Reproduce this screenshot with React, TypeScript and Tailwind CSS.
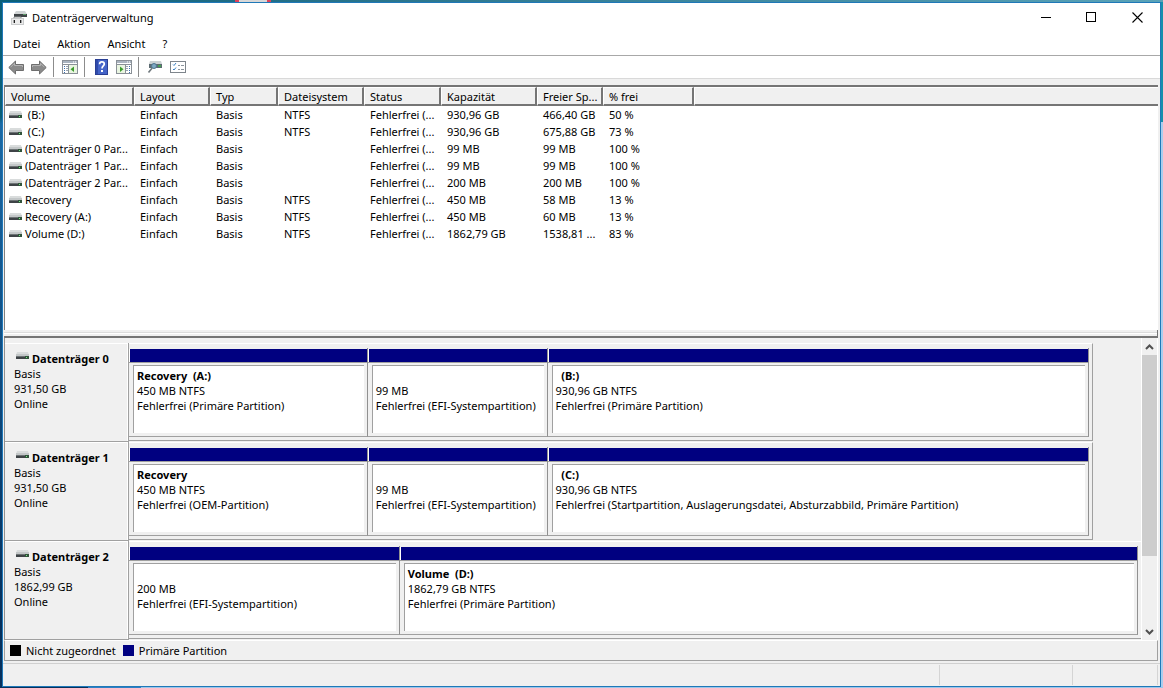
import type { ReactNode } from "react";

type Volume = {
  name: string;
  fs: string;
  capacity: string;
  free: string;
  percent: string;
};

type Partition = {
  name?: string;
  size: string;
  state: string;
};

type Disk = {
  name: string;
  size: string;
  grid: string;
  full?: boolean;
  partitions: Partition[];
};

const volumes: Volume[] = [
  { name: "\u00a0(B:)", fs: "NTFS", capacity: "930,96 GB", free: "466,40 GB", percent: "50 %" },
  { name: "\u00a0(C:)", fs: "NTFS", capacity: "930,96 GB", free: "675,88 GB", percent: "73 %" },
  { name: "(Datenträger 0 Par...", fs: "", capacity: "99 MB", free: "99 MB", percent: "100 %" },
  { name: "(Datenträger 1 Par...", fs: "", capacity: "99 MB", free: "99 MB", percent: "100 %" },
  { name: "(Datenträger 2 Par...", fs: "", capacity: "200 MB", free: "200 MB", percent: "100 %" },
  { name: "Recovery", fs: "NTFS", capacity: "450 MB", free: "58 MB", percent: "13 %" },
  { name: "Recovery (A:)", fs: "NTFS", capacity: "450 MB", free: "60 MB", percent: "13 %" },
  { name: "Volume (D:)", fs: "NTFS", capacity: "1862,79 GB", free: "1538,81 ...", percent: "83 %" },
];

const columns = [
  { label: "Volume", width: "w-[129px]" },
  { label: "Layout", width: "w-[76px]" },
  { label: "Typ", width: "w-[68px]" },
  { label: "Dateisystem", width: "w-[86px]" },
  { label: "Status", width: "w-[77px]" },
  { label: "Kapazität", width: "w-[96px]" },
  { label: "Freier Sp...", width: "w-[66px]" },
  { label: "% frei", width: "w-[91px]" },
];

const disks: Disk[] = [
  {
    name: "Datenträger 0",
    size: "931,50 GB",
    grid: "grid-cols-[239fr_180fr_542fr]",
    partitions: [
      { name: "Recovery\u00a0 (A:)", size: "450 MB NTFS", state: "Fehlerfrei (Primäre Partition)" },
      { size: "99 MB", state: "Fehlerfrei (EFI-Systempartition)" },
      { name: "\u00a0 (B:)", size: "930,96 GB NTFS", state: "Fehlerfrei (Primäre Partition)" },
    ],
  },
  {
    name: "Datenträger 1",
    size: "931,50 GB",
    grid: "grid-cols-[239fr_180fr_542fr]",
    partitions: [
      { name: "Recovery", size: "450 MB NTFS", state: "Fehlerfrei (OEM-Partition)" },
      { size: "99 MB", state: "Fehlerfrei (EFI-Systempartition)" },
      {
        name: "\u00a0 (C:)",
        size: "930,96 GB NTFS",
        state: "Fehlerfrei (Startpartition, Auslagerungsdatei, Absturzabbild, Primäre Partition)",
      },
    ],
  },
  {
    name: "Datenträger 2",
    size: "1862,99 GB",
    grid: "grid-cols-[271fr_739fr]",
    full: true,
    partitions: [
      { size: "200 MB", state: "Fehlerfrei (EFI-Systempartition)" },
      { name: "Volume\u00a0 (D:)", size: "1862,79 GB NTFS", state: "Fehlerfrei (Primäre Partition)" },
    ],
  },
];

function DriveIcon() {
  return (
    <svg width="13" height="8" viewBox="0 0 13 8" className="shrink-0" aria-hidden="true">
      <path d="M1 0h11l1 3H0z" fill="#d9dcdc" />
      <rect x="0" y="2" width="13" height="2" fill="#c3c7c8" />
      <rect x="0" y="4" width="13" height="3" fill="#3e4346" />
      <rect x="0" y="4" width="13" height="1" fill="#6d7375" />
      <rect x="9" y="4" width="4" height="3" fill="#31533a" />
      <rect x="10" y="5" width="1" height="1" fill="#7bea8c" />
    </svg>
  );
}

function AppIcon() {
  return (
    <svg width="16" height="16" viewBox="0 0 16 16" aria-hidden="true">
      <path d="M5 1h9l2 3H3z" fill="#d0d4d5" />
      <rect x="3" y="4" width="13" height="3" fill="#3f4447" />
      <rect x="12" y="4" width="3" height="1" fill="#5d9c69" />
      <rect x="0" y="8" width="13" height="7" fill="#c9cbcc" />
      <rect x="1" y="9" width="11" height="5" fill="#ececec" />
      <path d="M3 8V7h7v1" fill="none" stroke="#8b8e90" />
      <rect x="3" y="10" width="1" height="3" fill="#222" />
      <rect x="9" y="10" width="1" height="3" fill="#222" />
      <rect x="2" y="10" width="1" height="3" fill="#a3a5a6" />
      <rect x="10" y="10" width="1" height="3" fill="#a3a5a6" />
    </svg>
  );
}

function ArrowIcon({ right }: { right?: boolean }) {
  return (
    <svg width="16" height="15" viewBox="0 0 16 15" className={right ? "-scale-x-100" : ""} aria-hidden="true">
      <path d="M0.800 7.500L7.500 1v3.500h8v6h-8V14z" fill="#8b8b8b" stroke="#6e6e6e" strokeLinejoin="round" />
      <path d="M2.500 7.300L6.500 3.300v2.200h8v1.500" fill="none" stroke="#b5b5b5" />
    </svg>
  );
}

function PaneIcon({ right }: { right?: boolean }) {
  return (
    <svg width="16" height="14" viewBox="0 0 16 14" aria-hidden="true">
      <rect x="0.500" y="0.500" width="15" height="13" fill="#fff" stroke="#8a9097" />
      <rect x="1" y="1" width="14" height="2" fill="#a9b3bf" />
      <path d="M11 2h1M13 2h1" stroke="#fff" />
      <path d="M1 4.500h14" stroke="#8a9097" />
      <g transform={right ? "translate(16 0) scale(-1 1)" : undefined}>
        <path d="M6.500 5v8" stroke="#8a9097" />
        <path d="M2 6.500h1M2 8.500h1M2 10.500h1M2 12.500h1" stroke="#3b6fae" />
        <path d="M4 6.500h2M4 8.500h2M4 10.500h2" stroke="#9aa5b1" />
        <rect x="7" y="5" width="8" height="8" fill="#e9f5e1" />
        <path d="M12 6.500v5.500L8.500 9.200z" fill="#3c9c2c" />
      </g>
    </svg>
  );
}

function HelpIcon() {
  return (
    <svg width="13" height="16" viewBox="0 0 13 16" aria-hidden="true">
      <rect x="0.500" y="0.500" width="12" height="15" fill="#4464c8" stroke="#2a3f94" />
      <rect x="1" y="1" width="2" height="14" fill="#2f4bab" />
      <path
        d="M4.600 5.200C4.600 3.500 5.600 2.900 6.900 2.900C8.300 2.900 9.300 3.700 9.300 5C9.300 6.900 7 7.100 7 9.600"
        fill="none"
        stroke="#fff"
        strokeWidth="1.700"
      />
      <rect x="6" y="11" width="2" height="2" fill="#fff" />
    </svg>
  );
}

function RescanIcon() {
  return (
    <svg width="16" height="14" viewBox="0 0 16 14" aria-hidden="true">
      <path d="M3 1h11l1 3H2z" fill="#ccd2d4" />
      <rect x="2" y="4" width="13" height="4" fill="#5d6b72" />
      <rect x="11" y="5" width="3" height="2" fill="#45a052" />
      <circle cx="7" cy="6" r="2.500" fill="#7fa9c4" stroke="#4f7890" />
      <path d="M5.200 8L1.500 12.500" stroke="#6f787d" strokeWidth="1.600" />
    </svg>
  );
}

function ChecklistIcon() {
  return (
    <svg width="16" height="12" viewBox="0 0 16 12" aria-hidden="true">
      <rect x="0.500" y="0.500" width="15" height="11" fill="#fff" stroke="#7e858c" />
      <path d="M3 3.500l1 1 2-2.500M3 8l1 1 2-2.500" fill="none" stroke="#3b82c4" />
      <path d="M8 4.500h2M11 4.500h3M8 8.500h2M11 8.500h3" stroke="#8b949c" />
    </svg>
  );
}

function ToolButton({ label, children }: { label: string; children: ReactNode }) {
  return (
    <button type="button" aria-label={label} className="flex h-5 w-4 items-center justify-center">
      {children}
    </button>
  );
}

function Separator() {
  return <span className="ml-1.5 mr-2 h-5 w-px bg-[#8c8c8c]" />;
}

function TitleBar() {
  return (
    <header className="flex h-[29px] items-center bg-white pl-2">
      <AppIcon />
      <h1 className="ml-[5px]">Datenträgerverwaltung</h1>
      <div className="ml-auto flex h-full">
        <button type="button" aria-label="Minimieren" className="flex w-[46px] items-center justify-center">
          <svg width="11" height="11" viewBox="0 0 11 11">
            <path d="M1 5.500h10" stroke="#000" />
          </svg>
        </button>
        <button type="button" aria-label="Maximieren" className="flex w-[46px] items-center justify-center">
          <svg width="11" height="11" viewBox="0 0 11 11">
            <rect x="0.500" y="0.500" width="9" height="9" fill="none" stroke="#000" />
          </svg>
        </button>
        <button type="button" aria-label="Schließen" className="flex w-[46px] items-center justify-center">
          <svg width="11" height="11" viewBox="0 0 11 11">
            <path d="M0.500 0.500l10 10M10.500 0.500l-10 10" stroke="#000" strokeWidth="1.100" />
          </svg>
        </button>
      </div>
    </header>
  );
}

function VolumeTable() {
  return (
    <div className="ml-px mr-0.5 flex-1 border-l border-t-2 border-[#808080] border-t-[#757575] bg-white">
      <table className="w-full table-fixed border-separate border-spacing-0 text-left">
        <thead>
          <tr className="h-[19px] bg-[#f0f0f0]">
            {columns.map((c) => (
              <th
                key={c.label}
                scope="col"
                className={`${c.width} border-b-2 border-l border-r-2 border-t border-[#757575] border-l-white border-t-white p-0 pl-[5px] font-normal`}
              >
                {c.label}
              </th>
            ))}
            <td className="border-b-2 border-l border-t border-[#757575] border-l-white border-t-white p-0" />
          </tr>
        </thead>
        <tbody>
          {volumes.map((v) => (
            <tr key={v.name} className="h-[17px] whitespace-nowrap">
              <td className="p-0 pl-1">
                <div className="flex items-center gap-[3px]">
                  <DriveIcon />
                  {v.name}
                </div>
              </td>
              <td className="p-0 pl-1.5">Einfach</td>
              <td className="p-0 pl-1.5">Basis</td>
              <td className="p-0 pl-1.5">{v.fs}</td>
              <td className="p-0 pl-1.5">Fehlerfrei (...</td>
              <td className="p-0 pl-1.5">{v.capacity}</td>
              <td className="p-0 pl-1.5">{v.free}</td>
              <td className="p-0 pl-1.5">{v.percent}</td>
              <td className="p-0" />
            </tr>
          ))}
        </tbody>
      </table>
    </div>
  );
}

function PartitionBox({ partition }: { partition: Partition }) {
  return (
    <div className="flex flex-col border-b border-r border-[#a0a0a0] border-r-[#909090] pt-px">
      <div className="h-[13px] border-l border-white bg-[#000080]" />
      <div className="flex flex-1 flex-col border-t border-[#a0a0a0] py-0.5 pl-1 pr-[3px]">
        <div className="h-[68px] border-l border-t border-[#a0a0a0] bg-white pl-[3px] pt-0.5">
          <p className="h-[15px] whitespace-nowrap font-bold">{partition.name}</p>
          <p className="whitespace-nowrap">{partition.size}</p>
          <p className="whitespace-nowrap">{partition.state}</p>
        </div>
      </div>
    </div>
  );
}

function DiskRow({ disk }: { disk: Disk }) {
  return (
    <section className="flex h-[99px]">
      <div className="w-[124px] shrink-0 border-b border-r border-[#a0a0a0]">
        <div className="h-full border-r border-t border-white pl-[9px] pt-[7px]">
          <h2 className="flex gap-[3px] pl-0.5 font-bold">
            <span className="pt-px">
              <DriveIcon />
            </span>
            {disk.name}
          </h2>
          <p>Basis</p>
          <p>{disk.size}</p>
          <p>Online</p>
        </div>
      </div>
      <div className="flex-1">
        <div
          className={
            disk.full
              ? "h-[98px] border-b border-t border-[#a0a0a0] border-t-white pr-[3px] pt-1"
              : "mr-12 h-[98px] border-b border-r border-t border-[#a0a0a0] border-t-white pr-[3px] pt-1"
          }
        >
          <div className={`grid h-[89px] ${disk.grid}`}>
            {disk.partitions.map((p) => (
              <PartitionBox key={p.state + p.size} partition={p} />
            ))}
          </div>
        </div>
      </div>
    </section>
  );
}

function ScrollBar() {
  return (
    <div className="flex w-[17px] flex-col border-x border-white bg-[#f0f0f0]">
      <button type="button" aria-label="Nach oben" className="flex h-[17px] items-center justify-center">
        <svg width="9" height="6" viewBox="0 0 9 6">
          <path d="M1 5l3.500-3.500L8 5" fill="none" stroke="#505050" strokeWidth="2" />
        </svg>
      </button>
      <div className="flex-1">
        <div className="h-3/4 bg-[#cdcdcd]" />
      </div>
      <button type="button" aria-label="Nach unten" className="flex h-[17px] items-center justify-center">
        <svg width="9" height="6" viewBox="0 0 9 6">
          <path d="M1 1l3.500 3.500L8 1" fill="none" stroke="#505050" strokeWidth="2" />
        </svg>
      </button>
    </div>
  );
}

export default function App() {
  return (
    <div className="relative flex min-h-screen bg-linear-to-b from-[#0a5f78] from-17% via-[#1b69a5] via-18% to-[#06305c] to-90% pb-px pl-0.5 pt-0.5 font-['Noto_Sans','Open_Sans',sans-serif] text-[11px] leading-[15px] text-black">
      <div className="absolute inset-x-0 top-0 h-0.5 bg-linear-to-r from-[#0a5f78] to-[#5aa3b8]" />
      <div className="absolute left-[235px] top-0 h-0.5 w-9 bg-[#e0405a] px-1">
        <div className="h-full bg-[#d8d8d8]" />
      </div>
      <div className="absolute inset-x-0 bottom-0 flex h-px pl-[88px]">
        <div className="w-[53px] bg-[#2f7fc4]" />
        <div className="flex-1 bg-[#9cc6ea]" />
      </div>
      <main className="flex flex-1 flex-col border border-[#1f78b8] bg-[#f0f0f0]">
        <TitleBar />
        <nav className="flex h-[23px] items-center gap-[17px] bg-white pb-px pl-[10px]">
          <button type="button">Datei</button>
          <button type="button">Aktion</button>
          <button type="button">Ansicht</button>
          <button type="button">?</button>
        </nav>
        <div className="flex h-6 items-end border-y border-[#a8a8a8] border-b-[#d9d9d9] bg-white pb-px pl-[5px]">
          <ToolButton label="Zurück">
            <ArrowIcon />
          </ToolButton>
          <span className="w-[7px]" />
          <ToolButton label="Vorwärts">
            <ArrowIcon right />
          </ToolButton>
          <Separator />
          <ToolButton label="Konsolenstruktur einblenden">
            <PaneIcon />
          </ToolButton>
          <Separator />
          <ToolButton label="Hilfe">
            <HelpIcon />
          </ToolButton>
          <span className="w-[7px]" />
          <ToolButton label="Aktionsbereich einblenden">
            <PaneIcon right />
          </ToolButton>
          <Separator />
          <ToolButton label="Datenträger neu einlesen">
            <RescanIcon />
          </ToolButton>
          <span className="w-[7px]" />
          <ToolButton label="Eigenschaften">
            <ChecklistIcon />
          </ToolButton>
        </div>
        <div className="h-1.5" />
        <VolumeTable />
        <div className="ml-px mr-0.5 h-2 border-b-2 border-r border-[#757575] pt-0.5">
          <div className="h-0.5 border-t border-[#dcdcdc] bg-white" />
        </div>
        <div className="ml-px mr-0.5 flex border-l border-[#909090]">
          <div className="flex-1 pt-[5px]">
            {disks.map((d) => (
              <DiskRow key={d.name} disk={d} />
            ))}
          </div>
          <ScrollBar />
        </div>
        <footer>
          <div className="ml-px mr-0.5 flex h-[21px] items-center gap-[5px] border border-[#a0a0a0] border-t-white pl-[5px]">
            <span className="size-[11px] bg-black" />
            <span className="pr-0.5">Nicht zugeordnet</span>
            <span className="size-[11px] bg-[#000080]" />
            <span>Primäre Partition</span>
          </div>
          <div className="mt-0.5 flex h-[23px] border-t border-[#d0d0d0] py-px pr-0.5">
            <div className="flex-1 border-r border-[#d4d4d4]" />
            <div className="w-[133px] border-r border-[#d4d4d4]" />
            <div className="w-[85px] border-r border-[#d4d4d4]" />
          </div>
        </footer>
      </main>
      <div className="flex w-0.5 flex-col">
        <div className="h-30 bg-[#1590ac]" />
        <div className="flex-1 bg-[#a9cdee]" />
      </div>
    </div>
  );
}
